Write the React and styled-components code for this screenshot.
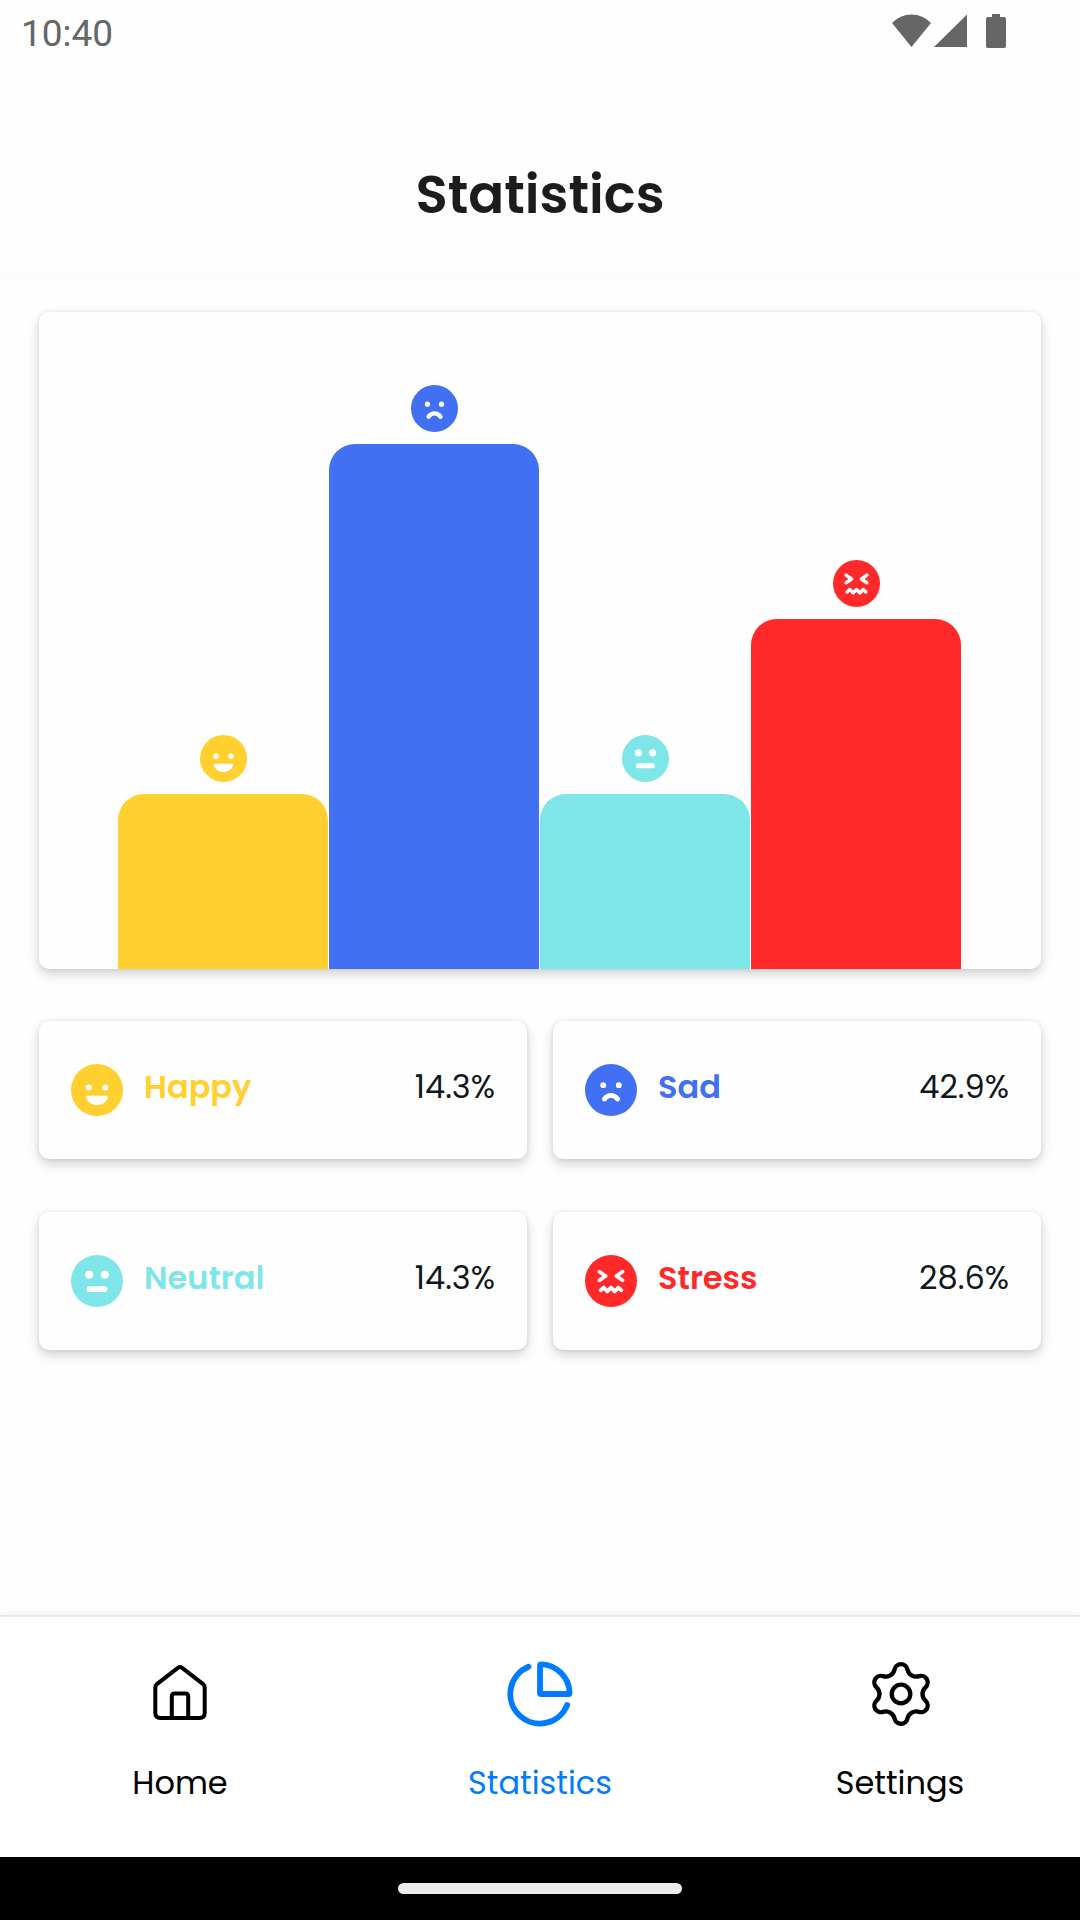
import React from "react";
import styled, { createGlobalStyle } from "styled-components";

const GlobalStyle = createGlobalStyle`
  *, *::before, *::after { box-sizing: border-box; }
  body {
    margin: 0;
    background: #fefefe;
    font-family: Poppins, Inter, "Open Sans", sans-serif;
  }
`;

const Page = styled.div`
  min-height: 100vh;
  display: flex;
  flex-direction: column;
  background: #fefefe;
`;

const StatusBar = styled.div`
  display: flex;
  align-items: center;
  justify-content: space-between;
  height: 63px;
  padding: 0 74px 0 21px;
  color: #666666;
`;

const Clock = styled.time`
  font-family: Roboto, sans-serif;
  font-size: 37px;
  line-height: 44px;
  padding-top: 4px;
`;

const StatusIcons = styled.div`
  display: flex;
  align-items: center;
  padding-bottom: 2px;

  svg { display: block; }
`;

const Header = styled.header`
  display: flex;
  align-items: flex-end;
  justify-content: center;
  height: 210px;
  padding-bottom: 39px;
  box-shadow: 0 4px 8px rgba(0, 0, 0, 0.02);
`;

const Title = styled.h1`
  margin: 0;
  font-size: 53px;
  line-height: 78px;
  font-weight: 600;
  color: #1c1c1e;
`;

const Main = styled.main`
  flex: 1;
  padding: 39px;
`;

const Card = styled.section`
  background: #fefefe;
  border-radius: 10px;
  box-shadow: 0 5px 12px rgba(0, 0, 0, 0.18), 0 0 4px rgba(0, 0, 0, 0.08);
`;

const Chart = styled(Card)`
  display: flex;
  align-items: flex-end;
  gap: 1px;
  height: 657px;
  padding: 0 80px 0 79px;
`;

const Column = styled.div`
  flex: 1;
  display: flex;
  flex-direction: column;
  align-items: center;
  gap: 12px;
`;

const Bar = styled.div`
  width: 100%;
  height: ${(p) => p.$count * 175}px;
  border-radius: 26px 26px 0 0;
  background: ${(p) => p.$color};
`;

const Summary = styled.div`
  display: grid;
  grid-template-columns: 1fr 1fr;
  gap: 53px 26px;
  margin-top: 52px;
`;

const SummaryCard = styled(Card)`
  display: flex;
  align-items: center;
  height: 138px;
  padding: 0 32px;
`;

const Mood = styled.h2`
  flex: 1;
  margin: 0;
  padding: 0 0 6px 21px;
  font-size: 32px;
  line-height: 48px;
  font-weight: 600;
  color: ${(p) => p.$color};
`;

const Share = styled.span`
  padding-bottom: 6px;
  font-size: 32px;
  line-height: 48px;
  color: #11181c;
`;

const TabBar = styled.nav`
  display: flex;
  border-top: 2px solid #e9e9e9;
  background: #ffffff;
  box-shadow: 0 -2px 8px rgba(0, 0, 0, 0.05);
`;

const Tab = styled.a`
  flex: 1;
  display: flex;
  flex-direction: column;
  align-items: center;
  gap: 32px;
  padding: 44px 0 50px;
  font-size: 32px;
  line-height: 48px;
  text-decoration: none;
  color: ${(p) => (p.$active ? "#007aff" : "#000000")};
`;

const GestureBar = styled.div`
  display: flex;
  align-items: center;
  justify-content: center;
  height: 63px;
  background: #000000;
`;

const GesturePill = styled.div`
  width: 284px;
  height: 11px;
  border-radius: 6px;
  background: #ebebeb;
`;

const FaceSvg = styled.svg`
  display: block;
  flex: none;
`;

const features = {
  happy: (
    <g fill="#fff">
      <circle cx="-8.3" cy="-2.6" r="3" />
      <circle cx="8.3" cy="-2.6" r="3" />
      <path d="M-10 5.7H10Q11.2 5.7 10.9 7C9.8 12 5.2 15 0 15S-9.8 12-10.9 7Q-11.2 5.7-10 5.7Z" />
    </g>
  ),
  sad: (
    <g fill="#fff">
      <circle cx="-7.8" cy="-4.8" r="2.9" />
      <circle cx="7.8" cy="-4.8" r="2.9" />
      <path
        d="M-6.6 9C-3 4.1 3 4.1 6.6 9"
        fill="none"
        stroke="#fff"
        strokeWidth="4.8"
        strokeLinecap="round"
      />
    </g>
  ),
  neutral: (
    <g fill="#fff">
      <circle cx="-7.8" cy="-6.3" r="4" />
      <circle cx="7.8" cy="-6.3" r="4" />
      <rect x="-10.5" y="5.2" width="21" height="5.7" rx="2.4" />
    </g>
  ),
  stress: (
    <g fill="none" stroke="#fff" strokeWidth="3.8" strokeLinecap="round" strokeLinejoin="round">
      <path d="M-11.5-9.3L-5.4-5L-11.5-.8" />
      <path d="M11.5-9.3L5.4-5L11.5-.8" />
      <path d="M-10.4 9.3L-7.4 6.6L-3.7 10.4L0 6.6L3.7 10.4L7.4 6.6L10.4 9.3" />
    </g>
  ),
};

function Face({ mood, color, size }) {
  return (
    <FaceSvg width={size} height={size} viewBox="-26 -26 52 52" aria-hidden="true">
      <circle r="26" fill={color} />
      {features[mood]}
    </FaceSvg>
  );
}

function WifiIcon() {
  return (
    <svg width="39" height="34" viewBox="0 0 39 34" fill="currentColor" aria-hidden="true">
      <path d="M0 9Q8 .5 19.5 .5T39 9L19.5 33Z" />
    </svg>
  );
}

function SignalIcon() {
  return (
    <svg width="36" height="34" viewBox="0 0 36 34" fill="currentColor" aria-hidden="true">
      <path d="M36 .5V33H3Z" />
    </svg>
  );
}

function BatteryIcon() {
  return (
    <svg width="39" height="34" viewBox="0 0 39 34" fill="currentColor" aria-hidden="true">
      <path d="M25 0H33V3H37Q39 3 39 5V32Q39 34 37 34H21Q19 34 19 32V5Q19 3 21 3H25Z" />
    </svg>
  );
}

function HomeIcon() {
  return (
    <svg
      width="66"
      height="66"
      viewBox="-33 -33 66 66"
      fill="none"
      stroke="currentColor"
      strokeWidth="4"
      strokeLinejoin="round"
      aria-hidden="true"
    >
      <path d="M-1.8-26.3Q0-27.6 1.8-26.3L22.8-10.2Q24.7-8.6 24.7-6.2V19Q24.7 24 19.7 24H-19.7Q-24.7 24-24.7 19V-6.2Q-24.7-8.6-22.8-10.2Z" />
      <path d="M-8.2 24V2.5Q-8.2-.5-5.2-.5H5.2Q8.2-.5 8.2 2.5V24" />
    </svg>
  );
}

function PieIcon() {
  return (
    <svg
      width="66"
      height="66"
      viewBox="0 0 66 66"
      fill="none"
      stroke="currentColor"
      strokeWidth="5.8"
      strokeLinecap="round"
      strokeLinejoin="round"
      aria-hidden="true"
    >
      <path d="M33 4.5Q33 3.3 34.2 3.3A29.4 29.4 0 0 1 62.6 31.7Q62.6 33 61.4 33H34Q33 33 33 32Z" />
      <path d="M21.5 5.8A29.5 29.5 0 1 0 60.2 44" />
    </svg>
  );
}

// Six rounded lobes joined by concave arcs.
function gearPath() {
  const rotate = (x, y, deg) => {
    const a = (deg * Math.PI) / 180;
    const px = x * Math.cos(a) - y * Math.sin(a);
    const py = x * Math.sin(a) + y * Math.cos(a);
    return `${px.toFixed(2)} ${py.toFixed(2)}`;
  };
  let d = "";
  for (let i = 0; i < 6; i += 1) {
    const turn = i * 60;
    d += i === 0 ? `M${rotate(-6.46, -24.55, 0)}` : `A8.96 8.96 0 0 0 ${rotate(-6.46, -24.55, turn)}`;
    d += `A6.6 6.6 0 0 1 ${rotate(6.46, -24.55, turn)}`;
  }
  return `${d}A8.96 8.96 0 0 0 ${rotate(-6.46, -24.55, 0)}Z`;
}

function GearIcon() {
  return (
    <svg
      width="66"
      height="66"
      viewBox="-34 -33 66 66"
      fill="none"
      stroke="currentColor"
      strokeWidth="4.3"
      aria-hidden="true"
    >
      <path d={gearPath()} />
      <circle r="9.3" />
    </svg>
  );
}

const moods = [
  { id: "happy", label: "Happy", color: "#ffd02f", count: 1, share: "14.3%" },
  { id: "sad", label: "Sad", color: "#4270f2", count: 3, share: "42.9%" },
  { id: "neutral", label: "Neutral", color: "#7ee5e9", count: 1, share: "14.3%" },
  { id: "stress", label: "Stress", color: "#ff2929", count: 2, share: "28.6%" },
];

const tabs = [
  { label: "Home", href: "#home", Icon: HomeIcon },
  { label: "Statistics", href: "#statistics", Icon: PieIcon, active: true },
  { label: "Settings", href: "#settings", Icon: GearIcon },
];

export default function App() {
  return (
    <Page>
      <GlobalStyle />
      <StatusBar>
        <Clock>10:40</Clock>
        <StatusIcons>
          <WifiIcon />
          <SignalIcon />
          <BatteryIcon />
        </StatusIcons>
      </StatusBar>
      <Header>
        <Title>Statistics</Title>
      </Header>
      <Main>
        <Chart>
          {moods.map((m) => (
            <Column key={m.id}>
              <Face mood={m.id} color={m.color} size={47} />
              <Bar $color={m.color} $count={m.count} />
            </Column>
          ))}
        </Chart>
        <Summary>
          {moods.map((m) => (
            <SummaryCard key={m.id}>
              <Face mood={m.id} color={m.color} size={52} />
              <Mood $color={m.color}>{m.label}</Mood>
              <Share>{m.share}</Share>
            </SummaryCard>
          ))}
        </Summary>
      </Main>
      <TabBar>
        {tabs.map(({ label, href, Icon, active }) => (
          <Tab key={label} href={href} $active={active} aria-current={active ? "page" : undefined}>
            <Icon />
            {label}
          </Tab>
        ))}
      </TabBar>
      <GestureBar>
        <GesturePill />
      </GestureBar>
    </Page>
  );
}
